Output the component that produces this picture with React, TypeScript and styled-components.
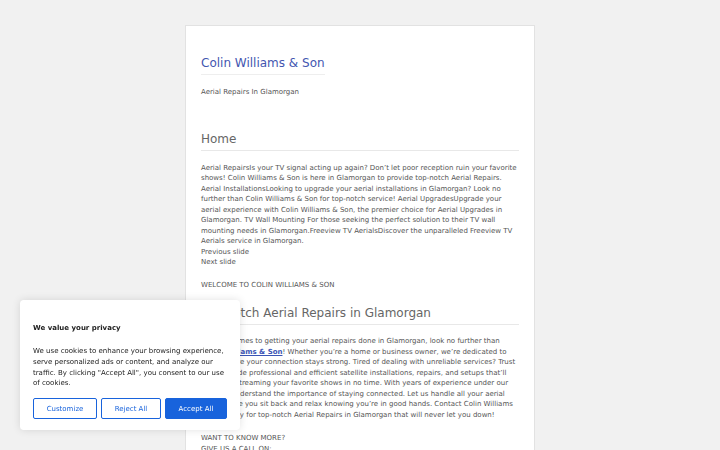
import React from 'react';
import styled, { createGlobalStyle } from 'styled-components';

const GlobalStyle = createGlobalStyle`
    html, body {
        margin: 0;
        padding: 0;
        background: #f1f1f1;
        font-family: "DejaVu Sans", "Noto Sans", sans-serif;
        color: #555;
    }
`;

const Page = styled.div`
    height: 450px;
    overflow: hidden;
    display: flex;
    justify-content: center;
    padding-top: 25px;
    box-sizing: border-box;
`;

const Sheet = styled.div`
    width: 350px;
    min-height: 500px;
    background: #fff;
    border: 1px solid #e2e2e2;
    box-sizing: border-box;
    padding: 26px 15px 0;
`;

const Title = styled.h1`
    display: inline-block;
    margin: 0;
    padding-bottom: 4px;
    font-size: 12px;
    line-height: 14px;
    font-weight: normal;
    color: #4356b0;
    border-bottom: 1px solid #eee;
`;

const Tagline = styled.p`
    margin: 12px 0 0;
    font-size: 7px;
    line-height: 10.5px;
    color: #555;
`;

const Heading = styled.h2<{ $top: number }>`
    margin: ${p => p.$top}px 0 0;
    padding-bottom: 4px;
    font-size: 12px;
    line-height: 14px;
    font-weight: normal;
    color: #666;
    border-bottom: 1px solid #e8e8e8;
`;

const Text = styled.div<{ $top?: number }>`
    margin-top: ${p => p.$top ?? 0}px;
    font-size: 7px;
    line-height: 10.5px;
    color: #555;
`;

const Link = styled.a`
    color: #3b55b5;
    font-weight: bold;
    text-decoration: underline;
`;

const Banner = styled.div`
    position: fixed;
    left: 20px;
    bottom: 20px;
    width: 220px;
    box-sizing: border-box;
    padding: 23px 13px 11px;
    background: #fff;
    border-radius: 4px;
    box-shadow: 0 0 8px rgba(0, 0, 0, 0.12);
`;

const BannerTitle = styled.div`
    font-size: 7px;
    line-height: 10px;
    font-weight: bold;
    color: #212121;
`;

const BannerText = styled.p`
    margin: 13px 0 0;
    font-size: 7px;
    line-height: 10.7px;
    color: #212121;
`;

const Buttons = styled.div`
    display: flex;
    gap: 4px;
    margin-top: 9px;
`;

const Button = styled.button<{ $primary?: boolean; $w: number }>`
    width: ${p => p.$w}px;
    height: 21px;
    padding: 0;
    font-family: inherit;
    font-size: 7px;
    border: 1px solid #1863dc;
    border-radius: 2px;
    background: ${p => (p.$primary ? '#1863dc' : '#fff')};
    color: ${p => (p.$primary ? '#fff' : '#1863dc')};
`;

export default function App() {
    return (
        <>
            <GlobalStyle />
            <Page>
                <Sheet>
                    <Title>Colin Williams &amp; Son</Title>
                    <Tagline>Aerial Repairs In Glamorgan</Tagline>
                    <Heading $top={34}>Home</Heading>
                    <Text $top={12}>
                        Aerial RepairsIs your TV signal acting up again? Don’t let poor reception ruin your favorite shows! Colin Williams &amp; Son is here in Glamorgan to provide top-notch Aerial Repairs. Aerial InstallationsLooking to upgrade your aerial installations in Glamorgan? Look no further than Colin Williams &amp; Son for top-notch service! Aerial UpgradesUpgrade your aerial experience with Colin Williams &amp; Son, the premier choice for Aerial Upgrades in Glamorgan. TV Wall Mounting For those seeking the perfect solution to their TV wall mounting needs in Glamorgan.Freeview TV AerialsDiscover the unparalleled Freeview TV Aerials service in Glamorgan.
                        <br />Previous slide
                        <br />Next slide
                    </Text>
                    <Text $top={12}>WELCOME TO COLIN WILLIAMS &amp; SON</Text>
                    <Heading $top={16}>Top-notch Aerial Repairs in Glamorgan</Heading>
                    <Text $top={11}>
                        When it comes to getting your aerial repairs done in Glamorgan, look no further than <Link>Colin Williams &amp; Son</Link>! Whether you’re a home or business owner, we’re dedicated to making sure your connection stays strong. Tired of dealing with unreliable services? Trust us to provide professional and efficient satellite installations, repairs, and setups that’ll have you streaming your favorite shows in no time. With years of experience under our belt, we understand the importance of staying connected. Let us handle all your aerial needs while you sit back and relax knowing you’re in good hands. Contact Colin Williams &amp; Son today for top-notch Aerial Repairs in Glamorgan that will never let you down!
                    </Text>
                    <Text $top={13}>
                        WANT TO KNOW MORE?
                        <br />GIVE US A CALL ON:
                    </Text>
                </Sheet>
            </Page>
            <Banner>
                <BannerTitle>We value your privacy</BannerTitle>
                <BannerText>
                    We use cookies to enhance your browsing experience, serve personalized ads or content, and analyze our traffic. By clicking "Accept All", you consent to our use of cookies.
                </BannerText>
                <Buttons>
                    <Button $w={64}>Customize</Button>
                    <Button $w={60}>Reject All</Button>
                    <Button $w={62} $primary>Accept All</Button>
                </Buttons>
            </Banner>
        </>
    );
}
